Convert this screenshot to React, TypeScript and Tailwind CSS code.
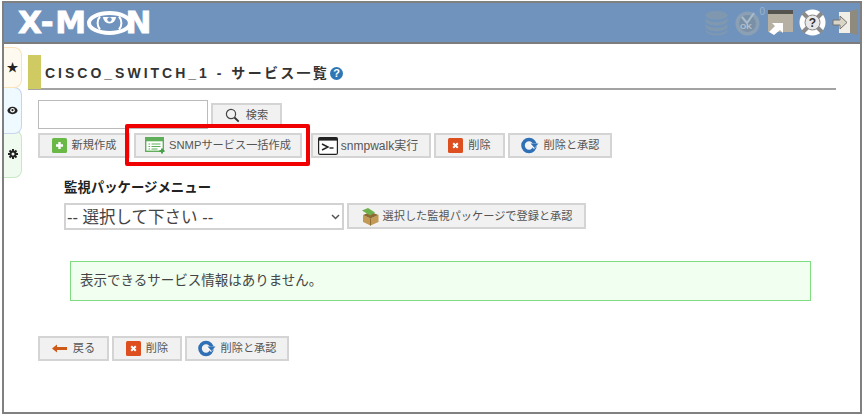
import { ReactNode } from "react";

const font = { fontFamily: '"Liberation Sans", "Noto Sans CJK JP", sans-serif' };

function PlusIcon() {
  return (
    <svg width="15" height="15" viewBox="0 0 15 15">
      <rect width="15" height="15" rx="1.5" fill="#6ab845" />
      <path d="M7.5 4v7M4 7.5h7" stroke="#fff" strokeWidth="2.4" />
    </svg>
  );
}

function ListIcon() {
  return (
    <svg width="21" height="17" viewBox="0 0 21 17">
      <rect x="0.7" y="0.7" width="17.6" height="13.6" fill="#fff" stroke="#5fae5a" strokeWidth="1.4" />
      <rect x="0.7" y="0.7" width="17.6" height="3.6" fill="#5fae5a" />
      <path d="M3.5 7h1.6M3.5 9.5h1.6M3.5 12h1.6M6.5 7h9M6.5 9.5h9M6.5 12h6" stroke="#5fae5a" strokeWidth="1.2" />
      <path d="M17 11.5v5M14.5 14h5" stroke="#4aa04a" strokeWidth="2" />
    </svg>
  );
}

function TerminalIcon() {
  return (
    <svg width="20" height="18" viewBox="0 0 20 18">
      <rect x="0.6" y="0.6" width="18.8" height="16.8" rx="1.5" fill="#fff" stroke="#222" strokeWidth="1.2" />
      <rect x="0.6" y="0.6" width="18.8" height="3" fill="#222" />
      <path d="M4 7l6 3-6 3" fill="none" stroke="#222" strokeWidth="1.4" />
      <path d="M11.5 11h4" stroke="#222" strokeWidth="1.4" />
    </svg>
  );
}

function DeleteIcon() {
  return (
    <svg width="15" height="15" viewBox="0 0 15 15">
      <rect width="15" height="15" rx="1.5" fill="#dd4f1f" />
      <path d="M5.2 5.2l4.6 4.6M9.8 5.2l-4.6 4.6" stroke="#fff" strokeWidth="2" />
    </svg>
  );
}

function RefreshIcon() {
  return (
    <svg width="18" height="17" viewBox="0 0 18 17">
      <circle cx="8" cy="8.500" r="6" fill="none" stroke="#2f6fb5" strokeWidth="3.600" />
      <path d="M8 6.500h10l-5 5.500z" fill="#fff" />
      <path d="M9.500 6.500h8l-4 4.500z" fill="#2f6fb5" />
    </svg>
  );
}

function BackIcon() {
  return (
    <svg width="15" height="9" viewBox="0 0 15 9">
      <path d="M0 4.5L5 0.5v2.6h10v2.8H5v2.6z" fill="#cf5a17" />
    </svg>
  );
}

function BoxIcon() {
  return (
    <svg width="19" height="19" viewBox="0 0 19 19">
      <path d="M2 8l7.5 3.5L17.5 8v7l-8 3.500-7.500-3.500z" fill="#c29a55" />
      <path d="M9.5 11.5v7" stroke="#8f6c30" />
      <path d="M2 8l7.5-3 8 3-8 3.500z" fill="#8c6a30" />
      <path d="M1 3.5L7 1l7 4.500-5 3z" fill="#6fb04f" />
    </svg>
  );
}

function SearchIcon() {
  return (
    <svg width="15" height="15" viewBox="0 0 15 15">
      <circle cx="6" cy="6" r="4.6" fill="none" stroke="#444" strokeWidth="1.2" />
      <path d="M9.5 9.5l4.2 4.2" stroke="#333" strokeWidth="1.8" />
    </svg>
  );
}

function HelpBadge() {
  return (
    <span className="flex h-[13px] w-[13px] items-center justify-center rounded-full bg-[#2f76b5] text-[11px] leading-none font-bold text-white">
      ?
    </span>
  );
}

function Btn({ icon, label, className, gap = "gap-[5px]" }: { icon: ReactNode; label: string; className: string; gap?: string }) {
  return (
    <button className={`flex h-[25px] shrink-0 items-center justify-center border-2 border-[#d4d4d4] bg-[#f1f1f1] text-[11.2px] whitespace-nowrap text-[#555] ${gap} ${className}`}>
      {icon}
      <span>{label}</span>
    </button>
  );
}

function Tab({ className, children }: { className: string; children: ReactNode }) {
  return (
    <div className={`flex w-[18px] items-center justify-center rounded-r-[8px] border border-l-0 text-[#222] ${className}`}>
      {children}
    </div>
  );
}

function HeaderIcons() {
  return (
    <div className="flex items-center gap-[6px]">
      <svg width="23" height="26" viewBox="0 0 24 26">
        <g fill="#7f98b0">
          <ellipse cx="12" cy="5" rx="11.500" ry="4.500" />
          <path d="M0.500 7c1 6.500 22 6.500 23 0v4c-1 6.500-22 6.500-23 0z" />
          <path d="M0.500 13c1 6.500 22 6.500 23 0v4c-1 6.500-22 6.500-23 0z" />
          <path d="M0.500 19c1 6.500 22 6.500 23 0v2c-1 6.500-22 6.500-23 0z" />
        </g>
      </svg>
      <div className="relative ml-[1px] h-[26px] w-[26px]">
        <svg width="26" height="26" viewBox="0 0 26 26">
          <circle cx="12.500" cy="13.500" r="12" fill="#8ba0b4" />
          <circle cx="12.500" cy="13.500" r="8.500" fill="#7a90a6" />
          <path d="M7 7l5 6 7-10" fill="none" stroke="#a9bccd" strokeWidth="2" />
        </svg>
        <span className="absolute top-[13px] left-[5px] text-[8px] leading-none font-bold text-[#b4c3d0]">OK</span>
        <span className="absolute top-[-3px] right-[-4px] text-[10px] leading-none text-[#9ab4cc]">0</span>
      </div>
      <svg width="25" height="25" viewBox="0 0 25 25" className="ml-[1px]">
        <rect x="0" y="0" width="25" height="22" fill="#b5b0a2" />
        <rect x="0" y="0" width="25" height="4" fill="#55534d" />
        <path d="M1 22l6-6-3-3h11v10l-3-3-6 5z" fill="#fff" />
      </svg>
      <svg width="27" height="27" viewBox="0 0 27 27">
        <circle cx="13.500" cy="13.500" r="13" fill="#fff" />
        <path d="M4 4l6 6M23 4l-6 6M4 23l6-6M23 23l-6-6" stroke="#8a8a8a" strokeWidth="4" />
        <circle cx="13.500" cy="13.500" r="7.500" fill="#e8e8e8" stroke="#888" />
        <text x="13.500" y="18" textAnchor="middle" fontSize="12" fontWeight="bold" fill="#333">?</text>
      </svg>
      <svg width="27" height="27" viewBox="0 0 27 27">
        <rect x="7" y="3" width="14" height="21" fill="#f0eee6" />
        <path d="M18 2l8-2v26l-8-2z" fill="#8e8a7e" />
        <path d="M1 11h7V7l7 6.500-7 6.500v-4H1z" fill="#d9d5c8" stroke="#77736a" />
      </svg>
    </div>
  );
}

export default function App() {
  return (
    <div className="h-[416px] w-[864px] overflow-hidden bg-white pt-[1px] pl-[2px]" style={font}>
      <div className="flex h-[413px] w-[860px] flex-col border-2 border-[#808080] bg-white">
        {/* Header */}
        <div className="flex h-[41px] shrink-0 items-center justify-between border-b-2 border-[#7c7c7c] bg-[#7093bd] pr-[1px] pl-[14px]">
          <div className="flex items-center text-[31px] leading-none font-bold tracking-[1.5px] text-white" style={{ fontFamily: '"DejaVu Sans", sans-serif', WebkitTextStroke: "0.8px #fff" }}>
            <span>X-M</span>
            <svg width="45" height="24" viewBox="0 0 45 24" className="z-10 -ml-[1px] shrink-0">
              <ellipse cx="22.500" cy="12" rx="20.500" ry="10" fill="none" stroke="#fff" strokeWidth="4" />
              <path d="M13 5.500a10 10 0 0 0 0 13M32 5.500a10 10 0 0 1 0 13" fill="none" stroke="#fff" strokeWidth="2" />
              <path d="M16 6h13a6.500 6.500 0 1 1-13 0z" fill="#fff" />
              <circle cx="22.500" cy="8.500" r="2.200" fill="#7093bd" />
            </svg>
            <span className="-ml-[6px]">N</span>
          </div>
          <HeaderIcons />
        </div>

        {/* Body */}
        <div className="flex min-h-0 flex-1">
          <div className="flex w-[18px] shrink-0 flex-col pt-[3px]">
            <Tab className="z-30 h-[41px] border-[#fbe2b8] bg-[#fffaf0]">
              <span className="text-[12px] leading-none">★</span>
            </Tab>
            <Tab className="z-20 -mt-px h-[47px] border-[#c6d4ee] bg-[#eefaff]">
              <svg width="11" height="9" viewBox="0 0 11 9">
                <ellipse cx="5.500" cy="4.500" rx="5" ry="3.700" fill="#222" />
                <circle cx="5.500" cy="4.200" r="2.300" fill="#fff" />
                <circle cx="5.500" cy="4.200" r="1.100" fill="#222" />
              </svg>
            </Tab>
            <Tab className="z-10 -mt-[4px] h-[48px] border-[#c6e8c6] bg-[#f0fbf0]">
              <svg width="12" height="12" viewBox="0 0 12 12">
                <path d="M6 1v10M1 6h10M2.500 2.500l7 7M9.500 2.500l-7 7" stroke="#222" strokeWidth="2" />
                <circle cx="6" cy="6" r="3.400" fill="#222" />
                <circle cx="6" cy="6" r="1.500" fill="#f0fbf0" />
              </svg>
            </Tab>
          </div>

          <div className="flex min-w-0 flex-1 flex-col pt-[11px] pl-[6px]">
            {/* Title */}
            <div className="flex h-[35px] w-[808px] border-b-2 border-[#a3a3a3]">
              <div className="h-[34px] w-[13px] shrink-0 bg-[#cfcb62]" />
              <div className="flex items-center gap-[1px] pt-[3px] pl-[4px]">
                <h1 className="text-[13px] font-bold whitespace-nowrap text-[#333]">
                  <span className="text-[14px] tracking-[3px]">CISCO_SWITCH_1 - </span>
                  <span className="text-[14px] tracking-[2.300px]">サービス一覧</span>
                </h1>
                <HelpBadge />
              </div>
            </div>

            {/* Search + actions */}
            <div className="relative mt-[10px] ml-[10px] flex w-[580px] flex-col gap-[4px]">
              <div className="flex items-end gap-[3px]">
                <input className="h-[29px] w-[170px] border border-[#bbb] bg-white" />
                <Btn icon={<SearchIcon />} label="検索" className="mb-[2px] h-[24px]! w-[71px]" gap="gap-[6px]" />
              </div>
              <div className="flex gap-[4px]">
                <Btn icon={<PlusIcon />} label="新規作成" className="w-[92px]" />
                <Btn icon={<ListIcon />} label="SNMPサービス一括作成" className="w-[168px]" gap="gap-[3px]" />
                <Btn icon={<TerminalIcon />} label="snmpwalk実行" className="ml-[5px] w-[120px] pr-[6px] text-[12px]!" gap="gap-[3px]" />
                <Btn icon={<DeleteIcon />} label="削除" className="-ml-[1px] w-[71px]" />
                <Btn icon={<RefreshIcon />} label="削除と承認" className="-ml-[1px] w-[104px]" />
              </div>
              {/* highlight */}
              <div className="absolute top-[24px] left-[87px] h-[42px] w-[185px] rounded-[2px] border-[4px] border-[#f00000]" />
            </div>

            {/* Package menu */}
            <div className="mt-[21px] ml-[36px]">
              <p className="text-[13.400px] leading-[18px] font-bold text-[#222]">監視パッケージメニュー</p>
              <div className="mt-[6px] flex items-start gap-[3px]">
                <div className="relative h-[27px] w-[280px]">
                  <select className="h-[27px] w-[280px] appearance-none border-2 border-[#d2d2d2] bg-white pl-[1px] text-[16.500px] text-[#444]" style={font}>
                    <option>-- 選択して下さい --</option>
                  </select>
                  <svg width="9" height="6" viewBox="0 0 9 6" className="pointer-events-none absolute top-[11px] right-[4px]">
                    <path d="M1 1l3.500 3.500L8 1" fill="none" stroke="#555" strokeWidth="1.500" />
                  </svg>
                </div>
                <Btn icon={<BoxIcon />} label="選択した監視パッケージで登録と承認" className="h-[26px]! w-[239px]" gap="gap-[3px]" />
              </div>
            </div>

            {/* Notice */}
            <div className="mt-[31px] ml-[42px] flex h-[40px] w-[741px] items-center border border-[#7fdc7f] bg-[#f0fff0] pl-[9px] text-[13.500px] text-[#444]">
              表示できるサービス情報はありません。
            </div>

            {/* Footer buttons */}
            <div className="mt-[35px] ml-[10px] flex gap-[3px]">
              <Btn icon={<BackIcon />} label="戻る" className="w-[71px]" gap="gap-[6px]" />
              <Btn icon={<DeleteIcon />} label="削除" className="w-[70px]" />
              <Btn icon={<RefreshIcon />} label="削除と承認" className="w-[104px]" />
            </div>
          </div>
        </div>
      </div>
    </div>
  );
}
